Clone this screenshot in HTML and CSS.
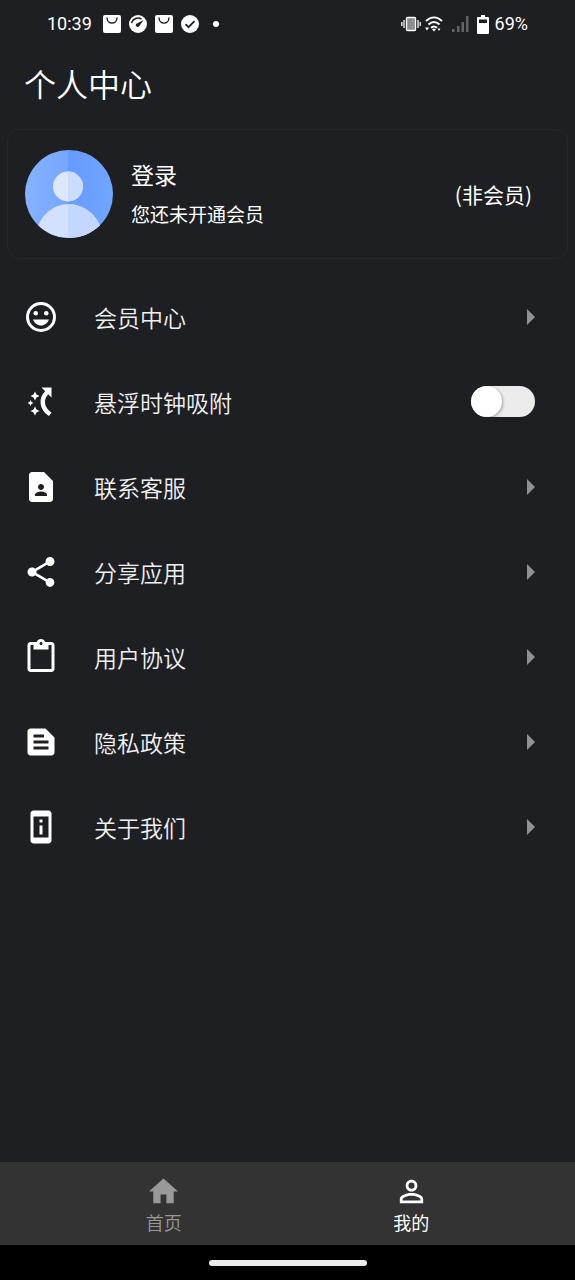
FILE: index.html
```html
<!DOCTYPE html>
<html lang="zh-CN">
<head>
<meta charset="utf-8">
<meta name="viewport" content="width=device-width, initial-scale=1">
<title>个人中心</title>
<link rel="stylesheet" href="styles.css">
</head>
<body>
<div class="status">
  <div class="status-left">
    <span class="status-text">10:39</span>
    <svg width="18" height="18" viewBox="0 0 18 18"><rect width="18" height="18" rx="2" fill="#fff"/><path d="M4 2.500c0 7.500 10 7.500 10 0" fill="none" stroke="#1e1f23" stroke-width="1.4"/></svg>
    <svg width="18" height="18" viewBox="0 0 18 18"><circle cx="9" cy="9" r="9" fill="#fff"/><path d="M2.500 8C4 3.500 9 2 12.500 4" fill="none" stroke="#1e1f23" stroke-width="1.500"/><path d="M14.500 5 10 11.500a2 2 0 0 1-3-2.500z" fill="#1e1f23"/></svg>
    <svg width="18" height="18" viewBox="0 0 18 18"><rect width="18" height="18" rx="2" fill="#fff"/><path d="M4 2.500c0 7.500 10 7.500 10 0" fill="none" stroke="#1e1f23" stroke-width="1.4"/></svg>
    <svg width="18" height="18" viewBox="0 0 18 18"><circle cx="9" cy="9" r="9" fill="#fff"/><path d="M4.500 9.200l3 3 6-6" fill="none" stroke="#1e1f23" stroke-width="1.700"/></svg>
    <span class="status-dot"></span>
  </div>
  <div class="status-right">
    <svg width="20" height="16" viewBox="0 0 20 16"><rect x="5.500" y="1.500" width="9" height="13" rx="1" fill="#8b8c8e" stroke="#fff" stroke-width="1.400"/><path d="M3 4v8M17 4v8M.8 6v4M19.200 6v4" stroke="#fff" stroke-width="1.300"/></svg>
    <svg class="wifi" width="18" height="18" viewBox="0 0 18 18"><g fill="none" stroke="#fff" stroke-width="2"><path d="M1 6c5-4.700 11-4.700 16 0"/><path d="M3.500 9.500c3.500-3.200 7.500-3.200 11 0"/><path d="M6 12.700c2-1.700 4-1.700 6 0"/></g><path d="M9 16.500 7 14.300q2-1.500 4 0z" fill="#fff"/><path d="M0 12.500h4L2 15.500zM12.500 13.500h3L14 16z" fill="#fff" transform="translate(0 0)"/></svg>
    <svg class="signal" width="17" height="16" viewBox="0 0 17 16"><path d="M0 13h2.500v3H0zM5 10h2.500v6H5zM9.500 6H12v10H9.500zM14 0h2.500v16H14z" fill="#636468"/></svg>
    <svg class="battery" width="12" height="19" viewBox="0 0 12 19"><path d="M4 0h4v2h3a1 1 0 0 1 1 1v15a1 1 0 0 1-1 1H1a1 1 0 0 1-1-1V3a1 1 0 0 1 1-1h3z" fill="#fff"/><path d="M2 4.500h8v3.500H2z" fill="#1e1f23"/></svg>
    <span class="status-text">69%</span>
  </div>
</div>

<header class="header"><h1 class="title">个人中心</h1></header>

<main class="main">
  <section class="card">
    <svg class="avatar" viewBox="0 0 88 88">
      <defs>
        <clipPath id="disc"><circle cx="44" cy="44" r="44"/></clipPath>
        <linearGradient id="left"><stop offset="0" stop-color="#86b2ff"/><stop offset="1" stop-color="#75a7ff"/></linearGradient>
        <linearGradient id="right"><stop offset="0" stop-color="#659bff"/><stop offset="1" stop-color="#72a5ff"/></linearGradient>
      </defs>
      <g clip-path="url(#disc)">
        <path d="M0 0h43v88H0z" fill="url(#left)"/><path d="M43 0h45v88H43z" fill="url(#right)"/>
        <circle cx="43" cy="36.500" r="15" fill="#dde8ff"/><path d="M43 21.500a15 15 0 0 1 0 30z" fill="#ccdcfd"/>
        <path d="M10 88c2-20 17-34 33-34s32 12 36 34z" fill="#d3e1ff"/><path d="M43 54c17 0 32 12 36 34H43z" fill="#c4d8ff"/>
      </g>
    </svg>
    <div class="who">
      <a class="login" href="#login">登录</a>
      <p class="hint">您还未开通会员</p>
    </div>
    <span class="level">(非会员)</span>
  </section>

  <ul class="menu">
    <li><a class="row" href="#vip">
      <svg class="icon" viewBox="0 0 24 24"><circle cx="12" cy="12" r="9" fill="none" stroke="#fff" stroke-width="2"/><circle cx="8.500" cy="9.500" r="1.500"/><circle cx="15.500" cy="9.500" r="1.500"/><path d="M6.700 13.700h10.600c-.8 2.400-2.900 4-5.300 4s-4.500-1.600-5.300-4z"/></svg>
      <span class="label">会员中心</span><span class="arrow"></span></a></li>
    <li><label class="row" for="snap">
      <svg class="icon" viewBox="0 0 36 36"><path d="M18.500 3.500h10v10l-3.300-3.300C20 16 21 23 28.500 28.800L26 32C16 25.500 15 14 22.200 7.200zM12 7.500l1.500 3 3 1.500-3 1.500-1.500 3-1.500-3-3-1.500 3-1.500zM7.500 16l1 2 2 1-2 1-1 2-1-2-2-1 2-1zM12 22.500l1.500 3 3 1.500-3 1.500-1.500 3-1.500-3-3-1.500 3-1.500z"/></svg>
      <span class="label">悬浮时钟吸附</span><input class="switch" type="checkbox" role="switch" id="snap"></label></li>
    <li><a class="row" href="#service">
      <svg class="icon" viewBox="0 0 24 24"><path d="M14 2H6c-1.100 0-2 .9-2 2v16c0 1.100.9 2 2 2h12c1.100 0 2-.9 2-2V8zm-2 8c1.100 0 2 .9 2 2s-.9 2-2 2-2-.9-2-2 .9-2 2-2zm4 8H8v-.6c0-.8.500-1.500 1.200-1.800.9-.4 1.800-.6 2.800-.6s1.900.2 2.800.6c.7.3 1.200 1 1.200 1.800z"/></svg>
      <span class="label">联系客服</span><span class="arrow"></span></a></li>
    <li><a class="row" href="#share">
      <svg class="icon" viewBox="0 0 24 24"><path d="M18 16.080c-.76 0-1.440.3-1.960.77L8.910 12.700c.05-.23.09-.46.09-.7s-.04-.47-.09-.7l7.050-4.110c.54.5 1.250.81 2.040.81 1.660 0 3-1.340 3-3s-1.340-3-3-3-3 1.340-3 3c0 .24.04.47.09.7L8.040 9.810C7.500 9.310 6.790 9 6 9c-1.660 0-3 1.340-3 3s1.340 3 3 3c.79 0 1.500-.31 2.040-.81l7.120 4.160c-.05.21-.08.43-.08.65 0 1.610 1.310 2.920 2.920 2.920s2.920-1.310 2.920-2.920-1.310-2.920-2.920-2.920z"/></svg>
      <span class="label">分享应用</span><span class="arrow"></span></a></li>
    <li><a class="row" href="#terms">
      <svg class="icon" viewBox="0 0 24 24"><path d="M19 2h-4.180C14.400.84 13.300 0 12 0S9.600.84 9.180 2H5c-1.100 0-2 .9-2 2v16c0 1.100.9 2 2 2h14c1.100 0 2-.9 2-2V4c0-1.100-.9-2-2-2zm-7 0c.55 0 1 .45 1 1s-.45 1-1 1-1-.45-1-1 .45-1 1-1zm7 18H5V4h2v3h10V4h2z"/></svg>
      <span class="label">用户协议</span><span class="arrow"></span></a></li>
    <li><a class="row" href="#privacy">
      <svg class="icon" viewBox="0 0 24 24"><path fill-rule="evenodd" d="M15 3H5c-1.100 0-2 .9-2 2v14c0 1.100.9 2 2 2h14c1.100 0 2-.9 2-2V9zM7 7h7v2H7zM7 11h10v2H7zM7 15h10v2H7z"/></svg>
      <span class="label">隐私政策</span><span class="arrow"></span></a></li>
    <li><a class="row" href="#about">
      <svg class="icon" viewBox="0 0 24 24"><path fill-rule="evenodd" d="M7 1h10c1.100 0 2 .9 2 2v18c0 1.100-.9 2-2 2H7c-1.100 0-2-.9-2-2V3c0-1.100.9-2 2-2zM7 5v14h10V5zM11 7h2v2h-2zM11 11h2v6h-2z"/></svg>
      <span class="label">关于我们</span><span class="arrow"></span></a></li>
  </ul>
</main>

<nav class="tabs">
  <a class="tab" href="#home"><svg class="tab-icon" viewBox="0 0 24 24"><path d="M10 20v-6h4v6h5v-8h3L12 3 2 12h3v8z"/></svg><span>首页</span></a>
  <a class="tab tab-active" href="#me" aria-current="page"><svg class="tab-icon" viewBox="0 0 24 24"><path d="M12 5.900a2.100 2.100 0 1 1 0 4.200 2.100 2.100 0 0 1 0-4.200m0 9c2.970 0 6.100 1.460 6.100 2.100v1.100H5.900V17c0-.64 3.130-2.100 6.100-2.100M12 4C9.790 4 8 5.790 8 8s1.790 4 4 4 4-1.790 4-4-1.790-4-4-4zm0 9c-2.670 0-8 1.340-8 4v3h16v-3c0-2.660-5.330-4-8-4z"/></svg><span>我的</span></a>
</nav>
<div class="gesture"><span class="pill"></span></div>
</body>
</html>
```
FILE: styles.css
```css
* { box-sizing: border-box; }
body {
  margin: 0;
  min-height: 100vh;
  display: flex;
  flex-direction: column;
  background: #1e1f23;
  color: #fff;
  font-family: "Noto Sans CJK SC", sans-serif;
}
a { color: inherit; text-decoration: none; }
svg { display: block; flex: none; }

.status {
  height: 48px;
  padding: 0 47px;
  display: flex;
  justify-content: space-between;
  align-items: center;
}
.status-left, .status-right { display: flex; align-items: center; }
.status-left { gap: 8px; }
.status-left .status-text { margin-right: 3px; }
.status-text { font-family: Roboto, sans-serif; font-size: 18px; line-height: 24px; }
.status-dot { width: 6px; height: 6px; margin-left: 6px; border-radius: 50%; background: #fff; }
.wifi { margin-left: 4px; }
.signal { margin-left: 9px; }
.battery { margin: 0 6px 0 8px; }

.header { padding: 0 24px 11px; }
.title { margin: 0; font-size: 32px; line-height: 70px; font-weight: 350; }

.main { flex: 1; }
.card {
  margin: 0 7px;
  padding: 20px 35px 20px 17px;
  display: flex;
  align-items: center;
  border: 1px solid #26272b;
  border-radius: 12px;
}
.avatar { width: 88px; height: 88px; }
.who { flex: 1; margin-left: 18px; }
.login { display: block; font-size: 23px; line-height: 40px; }
.hint { margin: 0; font-size: 19px; line-height: 40px; }
.level { font-size: 21px; line-height: 32px; }

.menu { margin: 15px 0 0; padding: 0; list-style: none; }
.row {
  height: 85px;
  padding: 0 40px 0 23px;
  display: flex;
  align-items: center;
  color: #f0f0f1;
}
.icon { width: 36px; height: 36px; fill: #fff; }
.label { flex: 1; margin-left: 35px; font-size: 23px; line-height: 32px; font-weight: 350; }
.arrow {
  border-left: 8px solid #919194;
  border-top: 8px solid transparent;
  border-bottom: 8px solid transparent;
}
.switch {
  appearance: none;
  width: 64px;
  height: 31px;
  margin: 0;
  display: flex;
  border-radius: 16px;
  background: #ebebeb;
  overflow: hidden;
}
.switch::before {
  content: "";
  width: 31px;
  height: 31px;
  border-radius: 50%;
  background: #fff;
  box-shadow: 1px 1px 3px rgba(0, 0, 0, 0.3);
}
.switch:checked { justify-content: flex-end; background: #659bff; }

.tabs { height: 83px; padding: 0 40px; display: flex; background: #333; }
.tab {
  flex: 1;
  padding-top: 12px;
  display: flex;
  flex-direction: column;
  align-items: center;
  font-size: 18px;
  line-height: 26px;
  font-weight: 350;
  color: #999;
  fill: #999;
}
.tab-active { color: #fff; fill: #fff; font-weight: 400; }
.tab-icon { width: 35px; height: 35px; }
.gesture {
  height: 35px;
  display: flex;
  align-items: center;
  justify-content: center;
  background: #000;
}
.pill { width: 158px; height: 6px; border-radius: 3px; background: #ececec; }
```
